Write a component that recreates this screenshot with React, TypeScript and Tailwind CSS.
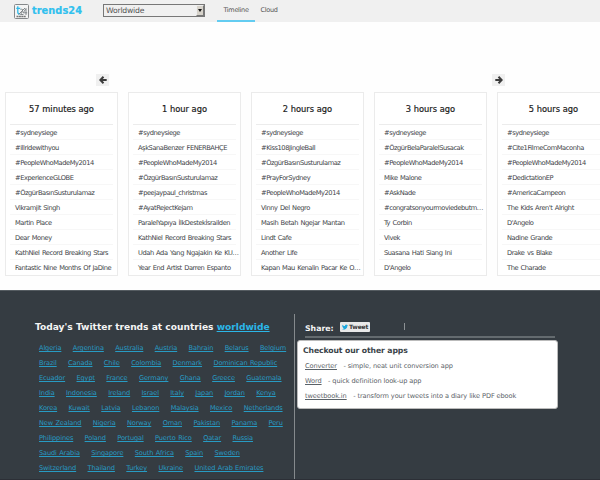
import React from "react";

const columns = [
  { title: "57 minutes ago", items: ["#sydneysiege", "#illridewithyou", "#PeopleWhoMadeMy2014", "#ExperienceGLOBE", "#ÖzgürBasınSusturulamaz", "Vikramjit Singh", "Martin Place", "Dear Money", "KathNiel Record Breaking Stars", "Fantastic Nine Months Of JaDine"] },
  { title: "1 hour ago", items: ["#sydneysiege", "AşkSanaBenzer FENERBAHÇE", "#PeopleWhoMadeMy2014", "#ÖzgürBasınSusturulamaz", "#peejaypaul_christmas", "#AyatRejectKejam", "ParalelYapıya İlkDestekİsrailden", "KathNiel Record Breaking Stars", "Udah Ada Yang Ngajakin Ke KU…", "Year End Artist Darren Espanto"] },
  { title: "2 hours ago", items: ["#sydneysiege", "#Kiss108JingleBall", "#ÖzgürBasınSusturulamaz", "#PrayForSydney", "#PeopleWhoMadeMy2014", "Vinny Del Negro", "Masih Betah Ngejar Mantan", "Lindt Cafe", "Another Life", "Kapan Mau Kenalin Pacar Ke O…"] },
  { title: "3 hours ago", items: ["#sydneysiege", "#ÖzgürBelaParalelSusacak", "#PeopleWhoMadeMy2014", "Mike Malone", "#AskNade", "#congratsonyourmoviedebutm…", "Ty Corbin", "Vivek", "Suasana Hati Siang Ini", "D'Angelo"] },
  { title: "5 hours ago", items: ["#sydneysiege", "#Cite1FilmeComMaconha", "#PeopleWhoMadeMy2014", "#DedictationEP", "#AmericaCampeon", "The Kids Aren't Alright", "D'Angelo", "Nadine Grande", "Drake vs Blake", "The Charade"] },
];

const countries = [
  ["Algeria", "Argentina", "Australia", "Austria", "Bahrain", "Belarus", "Belgium"],
  ["Brazil", "Canada", "Chile", "Colombia", "Denmark", "Dominican Republic"],
  ["Ecuador", "Egypt", "France", "Germany", "Ghana", "Greece", "Guatemala"],
  ["India", "Indonesia", "Ireland", "Israel", "Italy", "Japan", "Jordan", "Kenya"],
  ["Korea", "Kuwait", "Latvia", "Lebanon", "Malaysia", "Mexico", "Netherlands"],
  ["New Zealand", "Nigeria", "Norway", "Oman", "Pakistan", "Panama", "Peru"],
  ["Philippines", "Poland", "Portugal", "Puerto Rico", "Qatar", "Russia"],
  ["Saudi Arabia", "Singapore", "South Africa", "Spain", "Sweden"],
  ["Switzerland", "Thailand", "Turkey", "Ukraine", "United Arab Emirates"],
];

const apps = [
  ["Converter", "- simple, neat unit conversion app"],
  ["Word", "- quick definition look-up app"],
  ["tweetbook.in", "- transform your tweets into a diary like PDF ebook"],
];

function Arrow({ flip = false }: { flip?: boolean }) {
  return (
    <button className="flex h-[12px] w-[13px] items-center justify-center bg-[#f0f0f0]">
      <svg viewBox="0 0 8 8" className={flip ? "h-2 w-2 rotate-180" : "h-2 w-2"}>
        <path d="M4.500 .7 1.300 4l3.200 3.300M1.500 4H7.700" fill="none" stroke="#3c3c3c" strokeWidth="2" />
      </svg>
    </button>
  );
}

function Logo() {
  return (
    <svg viewBox="0 0 15 15" className="h-[15px] w-[15px]">
      <rect x=".5" y=".5" width="14" height="14" rx="1" fill="#f4f4f4" stroke="#85888a" />
      <path d="M3.800 2.300v6q0 1.700 2 1.700M2.300 4.300h4" fill="none" stroke="#2fb9e8" strokeWidth="1.300" />
      <path d="M6.500 6q1-1.800 2-.5T6.500 10.500H9.500M12 11V4.500L9.200 8.800h4M4.500 10.500l6.500-6.500" fill="none" stroke="#777d80" strokeWidth=".9" />
      <path d="M2.500 12.500h9.500" stroke="#777" strokeWidth="1.300" strokeDasharray="2 .4" />
    </svg>
  );
}

export default function App() {
  return (
    <div className="flex h-[480px] w-[600px] flex-col overflow-hidden bg-[#fefefe] font-['DejaVu_Sans',sans-serif] text-[#3e4347]">
      <header className="flex h-[22px] shrink-0 bg-[#f0f0f0] pl-[14px]">
        <div className="flex w-[89px] pt-[4px]">
          <Logo />
          <span className="ml-[3px] text-[9.8px] leading-[14px] font-bold tracking-[0.05px] text-[#2fc0ee] [-webkit-text-stroke:0.2px_#2fc0ee]">trends24</span>
        </div>
        <div className="mt-[4px] flex h-[13px] w-[102px] items-center justify-between border border-[#777] bg-[#f0f0f0] pl-[2px]">
          <span className="text-[7.700px] leading-[11px] tracking-[-0.2px] text-[#555]">Worldwide</span>
          <span className="flex h-[11px] w-[8px] items-center justify-center border border-t-[#eee] border-r-[#777] border-b-[#777] border-l-[#eee] bg-[#d6d2ca]">
            <svg viewBox="0 0 4 3" className="h-[3px] w-[4px]"><path d="M0 0h4L2 3z" fill="#111" /></svg>
          </span>
        </div>
        <nav className="ml-[12px] flex text-[6.5px] leading-[20px] tracking-[-0.3px] text-[#555]">
          <a className="h-[22px] w-[38px] border-b-2 border-[#63ccf1] text-center">Timeline</a>
          <a className="ml-[5.500px] text-center">Cloud</a>
        </nav>
      </header>

      <div className="mt-[52px] flex h-[12px] shrink-0 justify-between pr-[95px] pl-[96px]">
        <Arrow />
        <Arrow flip />
      </div>

      <main className="mt-[6px] flex h-[198px] shrink-0 gap-[10px] pl-[5px]">
        {columns.map((c) => (
          <section key={c.title} className="h-[184px] w-[113px] shrink-0 border border-[#ebebeb] bg-white px-[4px]">
            <h2 className="h-[32px] border-b border-[#ececec] text-center text-[8.3px] leading-[32px] text-[#1c1c1c] [-webkit-text-stroke:0.2px_#1c1c1c]">{c.title}</h2>
            <ol>
              {c.items.map((t, i) => (
                <li key={i} className="h-[15px] border-b border-[#f7f7f7] pl-[5px] text-[6.700px] leading-[17px] tracking-[-0.45px] whitespace-nowrap [word-spacing:0.75px] last:border-0">{t}</li>
              ))}
            </ol>
          </section>
        ))}
      </main>

      <footer className="flex grow border-t border-b border-t-[#555c61] border-b-[#2c2f36] bg-[#353c42]">
        <div className="mt-[23px] h-[165px] w-[295px] shrink-0 border-r border-[#858a8d] pl-[35px]">
          <h3 className="h-[26px] text-[9.1px] leading-[27px] font-bold whitespace-nowrap text-[#f4f4f4]">
            Today's Twitter trends at countries <a className="text-[#2bb7e8] underline">worldwide</a>
          </h3>
          <div className="pl-[4px]">
            {countries.map((row) => (
              <div key={row[0]} className="flex h-[15px] gap-[11.400px] text-[6.600px] leading-[17px] tracking-[-0.12px] whitespace-nowrap text-[#279bc3] [word-spacing:0.4px]">
                {row.map((c) => <a key={c} className="underline">{c}</a>)}
              </div>
            ))}
          </div>
        </div>
        <div className="pt-[29px] pl-[2px]">
          <div className="ml-[8px] flex h-[18px] w-[250px] border-b-2 border-[#646b6f]">
            <span className="w-[35px] text-[7.800px] leading-[17px] font-bold text-[#f4f4f4]">Share:</span>
            <span className="mt-[2px] flex h-[10px] w-[30px] items-center rounded-[1px] bg-[#e9e9e9] pl-[2px]">
              <svg viewBox="0 0 24 24" className="h-[6px] w-[6px]"><path fill="#20a9df" d="M24 4.600c-.9.400-1.800.7-2.800.8 1-.6 1.800-1.600 2.200-2.700-1 .6-2 1-3.100 1.200A4.900 4.900 0 0 0 11.900 8.400C7.800 8.200 4.200 6.200 1.700 3.200c-1.300 2.200-.7 5.100 1.500 6.600-.8 0-1.600-.2-2.200-.6-.1 2.300 1.600 4.400 3.900 4.900-.7.200-1.500.2-2.200.1.600 2 2.400 3.400 4.600 3.400A9.900 9.900 0 0 1 0 19.600 14 14 0 0 0 21.500 7.100c1-.7 1.800-1.600 2.500-2.500z" /></svg>
              <span className="ml-[1px] text-[6px] leading-[8px] font-bold tracking-[-0.15px] text-[#333]">Tweet</span>
            </span>
            <span className="mt-[3px] ml-[34px] h-[7px] w-px bg-[#8c9194]" />
          </div>
          <div className="mt-[2px] h-[69px] w-[261px] rounded-[3px] border border-[#bbb] bg-white pt-px pl-[5px]">
            <h4 className="h-[16px] text-[7.700px] leading-[17px] font-bold tracking-[-0.1px] whitespace-nowrap text-[#3b444a]">Checkout our other apps</h4>
            {apps.map(([n, d]) => (
              <p key={n} className="ml-[2px] flex h-[15px] gap-[6.500px] text-[6.600px] leading-[17px] tracking-[-0.1px] whitespace-nowrap text-[#5a6268]">
                <a className="underline">{n}</a>
                <span>{d}</span>
              </p>
            ))}
          </div>
        </div>
      </footer>
    </div>
  );
}
